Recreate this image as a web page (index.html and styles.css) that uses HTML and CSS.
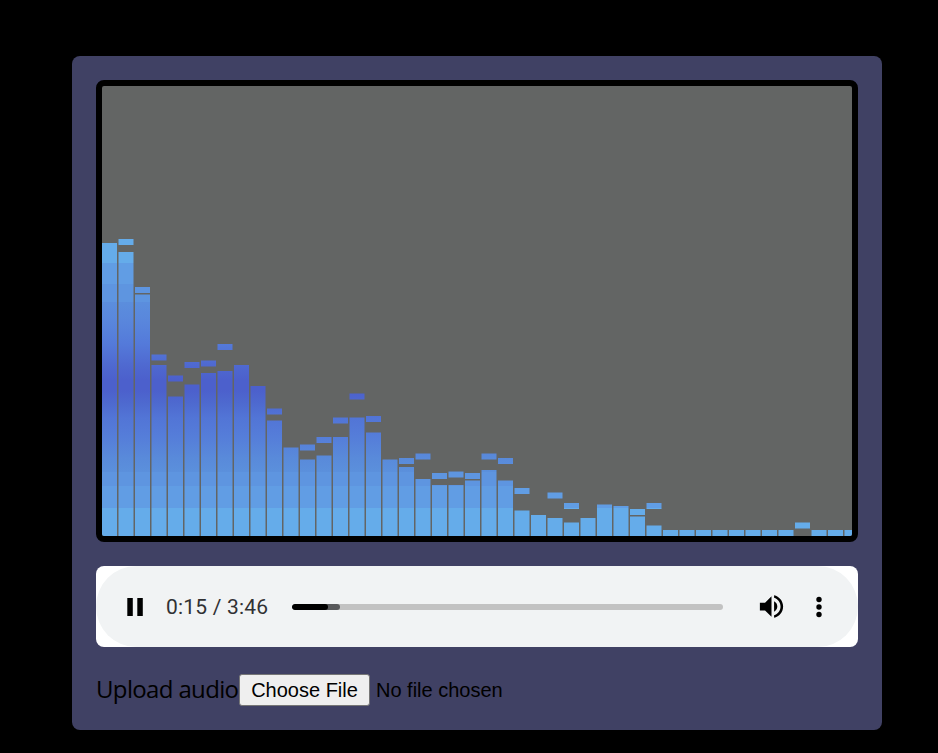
FILE: index.html
```html
<!DOCTYPE html>
<html lang="en">
<head>
<meta charset="utf-8">
<title>Audio Visualizer</title>
<link rel="stylesheet" href="styles.css">
</head>
<body>
<main class="player">
  <canvas class="visualizer" id="visualizer" width="750" height="450"></canvas>
  <div class="audio">
    <div class="controls">
      <svg class="icon pause" viewBox="0 0 32 32"><path d="M8.300 7h5.500v18H8.300zM18.300 7h5.500v18h-5.500z"/></svg>
      <span class="time">0:15 / 3:46</span>
      <div class="track"><div class="buffered"></div><div class="played"></div></div>
      <svg class="icon volume" viewBox="0 0 24 24"><path d="M3 9v6h4l5 5V4L7 9H3zm13.500 3c0-1.770-1.020-3.290-2.500-4.030v8.050c1.480-.730 2.500-2.250 2.500-4.020zM14 3.230v2.060c2.890.860 5 3.540 5 6.710s-2.110 5.850-5 6.710v2.060c4.010-.910 7-4.490 7-8.770s-2.990-7.860-7-8.770z"/></svg>
      <svg class="icon more" viewBox="0 0 32 32"><circle cx="16" cy="8.500" r="2.700"/><circle cx="16" cy="16" r="2.700"/><circle cx="16" cy="23.500" r="2.700"/></svg>
    </div>
  </div>
  <div class="upload">
    <span class="upload-label">Upload audio</span>
    <button class="choose" type="button">Choose File</button>
    <span class="filename">No file chosen</span>
  </div>
</main>
<script src="visualizer.js"></script>
</body>
</html>
```
FILE: styles.css
```css
* { box-sizing: border-box; }
body {
  margin: 0;
  height: 753px;
  padding: 56px 56px 0 72px;
  background: #000;
  overflow: hidden;
}
.player {
  width: 810px;
  height: 674px;
  padding: 24px;
  display: flex;
  flex-direction: column;
  gap: 24px;
  background: #404164;
  border-radius: 8px;
}
.visualizer {
  display: block;
  width: 762px;
  height: 462px;
  border: 6px solid #000;
  border-radius: 8px;
  background: #636564;
  flex: none;
}
.audio {
  height: 81px;
  flex: none;
  background: #fff;
  border-radius: 8px;
  overflow: hidden;
}
.controls {
  height: 81px;
  display: flex;
  align-items: center;
  background: #f1f3f4;
  border-radius: 41px;
}
.icon { width: 32px; height: 32px; flex: none; fill: #000; }
.pause { margin-left: 23px; }
.time {
  width: 126px;
  margin-left: 15px;
  font: 21px/24px Roboto, sans-serif;
  letter-spacing: 0.2px;
  color: #303133;
  white-space: nowrap;
}
.track {
  display: grid;
  width: 431px;
  height: 6px;
  border-radius: 3px;
  background: #c2c2c2;
  overflow: hidden;
}
.buffered, .played { grid-area: 1 / 1; height: 6px; border-radius: 3px; }
.buffered { width: 48px; background: #58595b; }
.played { width: 36px; background: #000; }
.volume { width: 31px; height: 31px; margin: 0 0 0 33px; }
.more { margin-left: 16px; }
.upload {
  display: flex;
  flex: none;
  align-items: center;
  height: 36px;
}
.upload-label {
  width: 143px;
  margin-top: -1px;
  font: 24px/34px "Open Sans", sans-serif;
  letter-spacing: -0.65px;
  color: #000;
  white-space: nowrap;
}
.choose {
  width: 131px;
  height: 32px;
  margin-top: 2px;
  padding: 1px 0 0;
  border: 1px solid #767676;
  border-radius: 3px;
  background: #efefef;
  color: #000;
  font: 20px "Liberation Sans", Arial, sans-serif;
}
.filename {
  margin: 3px 0 0 6px;
  font: 20px "Liberation Sans", Arial, sans-serif;
  white-space: nowrap;
}
```
FILE: visualizer.js
```js
const canvas = document.getElementById("visualizer");
const ctx = canvas.getContext("2d");
const H = canvas.height;
const BAR = 15, PITCH = 16.5, CAP = 6;

// Heights above the baseline.
const bars = [
  293, 284, 241.5, 171, 139.5, 151.5, 163, 165, 171, 150,
  115.5, 88.5, 76.5, 80.5, 99, 118.5, 103.5, 76.5, 69, 57,
  51, 51, 55.5, 66, 55.5, 25.5, 21, 18, 13.5, 18,
  31.5, 30, 19.5, 10.5, 6, 6, 6, 6, 6, 6, 6, 6, 0, 6, 6, 6
];
const caps = {
  1: 297, 2: 249, 3: 181.5, 4: 160.5, 5: 174, 6: 175.5, 7: 192,
  10: 127.5, 12: 91.5, 13: 99, 14: 118.5, 15: 142.5, 16: 120,
  18: 78, 19: 82.5, 20: 63, 21: 64.5, 22: 63, 23: 82.5, 24: 78,
  25: 48, 27: 43.5, 28: 33, 32: 27, 33: 33, 42: 13.5
};

const stops = [
  [0, "#65acea"], [28, "#65acea"], [28, "#619de4"], [50, "#619de4"],
  [50, "#5e95e0"], [64, "#5e95e0"], [64, "#5b90dc"], [78, "#598ada"],
  [100, "#557dd9"], [118, "#5275d6"], [132, "#4e6acf"], [146, "#4c60cc"],
  [156, "#4c60cc"], [171, "#4f69d0"], [192, "#547ada"], [214, "#5986dc"],
  [234, "#5b8edd"], [234, "#5e95e0"], [252, "#5e95e0"], [252, "#619de4"],
  [273, "#619de4"], [273, "#65acea"], [450, "#65acea"]
];
const fill = ctx.createLinearGradient(0, H, 0, 0);
stops.forEach(([y, color]) => fill.addColorStop(y / H, color));
ctx.fillStyle = fill;

bars.forEach((h, i) => {
  ctx.fillRect(i * PITCH, H - h, BAR, h);
  if (caps[i]) ctx.fillRect(i * PITCH, H - caps[i], BAR, CAP);
});
```
